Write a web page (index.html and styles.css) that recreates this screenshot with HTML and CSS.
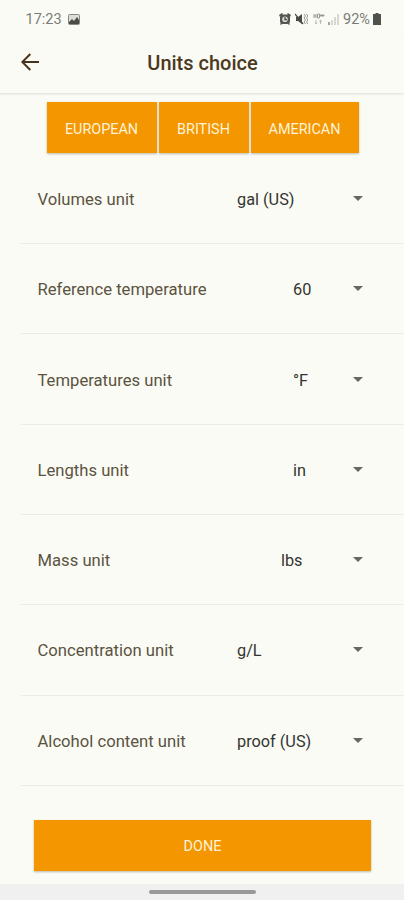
FILE: index.html
```html
<!DOCTYPE html>
<html lang="en">
<head>
<meta charset="utf-8">
<title>Units choice</title>
<link rel="stylesheet" href="styles.css">
</head>
<body>
<div class="status">
  <span class="clock">17:23</span>
  <svg class="picture" width="12" height="11" viewBox="0 0 12 11"><rect x=".5" y=".5" width="11" height="10" rx="1" fill="#deded9" stroke="#888984"/><path d="M1 8l3-3 2 2 3-4 2 3v4H1z" fill="#4b4c48"/></svg>
  <div class="indicators">
    <svg width="12" height="12" viewBox="0 0 12 12"><path d="M0 2l3-2 1 1-3 3zM12 2L9 0 8 1l3 3zM1 11l2-2 1 1-2 2zM11 11L9 9l-1 1 2 2z" fill="#555652"/><rect x="1" y="1.5" width="10" height="9.5" rx="3" fill="#555652"/><circle cx="6" cy="6.3" r="2.8" fill="#d8d9d4"/><path d="M6 4v2.6h2" fill="none" stroke="#444" stroke-width="1.2"/></svg>
    <svg class="mute" width="13" height="12" viewBox="0 0 13 12"><path d="M1 4h2l4-3v10L3 8H1z" fill="#4b4c48"/><path d="M0 1l8 10" stroke="#4b4c48" stroke-width="1.3"/><path d="M9 1l1.5 2L9 5l1.5 2L9 9l1.5 2M11.5 1L13 3l-1.5 2L13 7l-1.5 2L13 11" fill="none" stroke="#777874" stroke-width=".8"/></svg>
    <svg class="network" width="12" height="12" viewBox="0 0 12 12"><path d="M1 1v4M3 1v4M1 3h2M4.5 1v4h2V1zM8 1v3M10 1v3M7 2.5h4.5" fill="none" stroke="#92938f" stroke-width=".9"/><path d="M3 7v3.5M2 9.5l1 1.5 1-1.5M7.5 11V7M6.5 8.5l1-1.5 1 1.5" fill="none" stroke="#b2b3af" stroke-width=".9"/></svg>
    <svg class="signal" width="11" height="12" viewBox="0 0 11 12"><path d="M0 9h2v3H0z" fill="#a5a6a2"/><path d="M3 7h2v5H3zM6 4h2v8H6zM9 1h2v11H9z" fill="#d7d8d3"/></svg>
    <span class="percent">92%</span>
    <svg class="battery" width="8" height="12" viewBox="0 0 8 12"><path d="M2.5 0h3v1H8v11H0V1h2.5z" fill="#50514d"/></svg>
  </div>
</div>
<header class="header">
  <svg class="back" width="18" height="18" viewBox="0 0 18 18"><path d="M18 9H1.5M9.3 1L1.3 9l8 8" fill="none" stroke="#4b321b" stroke-width="2"/></svg>
  <h1 class="title">Units choice</h1>
</header>
<div class="presets">
  <button class="button european">EUROPEAN</button>
  <button class="button british">BRITISH</button>
  <button class="button american">AMERICAN</button>
</div>
<main class="rows">
  <div class="row"><span class="label">Volumes unit</span><span class="value wide">gal (US)</span><i class="caret"></i></div>
  <div class="row"><span class="label">Reference temperature</span><span class="value">60</span><i class="caret"></i></div>
  <div class="row"><span class="label">Temperatures unit</span><span class="value">°F</span><i class="caret"></i></div>
  <div class="row"><span class="label">Lengths unit</span><span class="value">in</span><i class="caret"></i></div>
  <div class="row"><span class="label">Mass unit</span><span class="value medium">lbs</span><i class="caret"></i></div>
  <div class="row"><span class="label">Concentration unit</span><span class="value wide">g/L</span><i class="caret"></i></div>
  <div class="row"><span class="label">Alcohol content unit</span><span class="value wide">proof (US)</span><i class="caret"></i></div>
</main>
<button class="button done">DONE</button>
<div class="navigation"><div class="handle"></div></div>
</body>
</html>
```
FILE: styles.css
```css
* { box-sizing: border-box; }
body {
  margin: 0;
  height: 900px;
  overflow: hidden;
  background: #fafbf5;
  font-family: Roboto, sans-serif;
  display: flex;
  flex-direction: column;
}
svg { display: block; flex: none; }
.status {
  height: 38px;
  padding: 0 23px 0 25.5px;
  display: flex;
  align-items: center;
  color: #7a7b77;
  font-size: 14.5px;
}
.clock { width: 42.5px; }
.indicators { margin-left: auto; display: flex; align-items: center; }
.mute { margin-left: 4px; }
.network { margin-left: 5px; }
.signal { margin-left: 3px; }
.percent { width: 27px; margin-left: 4px; white-space: nowrap; }
.battery { margin-left: 3px; }
.header {
  height: 55px;
  padding-left: 21px;
  display: flex;
  align-items: center;
  box-shadow: 0 1px 2px rgba(60, 60, 50, .15);
}
.back { margin-bottom: 8px; }
.title {
  margin: 0 38px 6px 0;
  flex: 1;
  text-align: center;
  color: #4b3921;
  font-size: 20px;
  font-weight: 500;
}
.presets {
  display: flex;
  gap: 2px;
  padding: 9px 0 0 47px;
}
.button {
  border: 0;
  padding: 2px 0 0;
  height: 51px;
  background: #f49600;
  color: #fff3d8;
  font: 400 14.4px Roboto, sans-serif;
  box-shadow: 0 1px 2px rgba(70, 60, 30, .35);
}
.presets .button { padding: 3px 1px 0 0; }
.european { width: 110px; }
.british { width: 90px; }
.american { width: 108px; }
.rows { padding: .7px 0 0 21px; }
.row {
  height: 90.34px;
  padding-left: 16.5px;
  display: flex;
  align-items: center;
  border-bottom: 1px solid #ebece7;
  font-size: 16.65px;
}
.label { flex: 1; padding-top: 2px; color: #5c5341; }
.value { width: 60px; padding-top: 2px; color: #343531; font-size: 16.3px; }
.medium { width: 72px; }
.wide { width: 116px; }
.caret {
  margin-right: 41px;
  border: 5.5px solid transparent;
  border-top-color: #666762;
  border-bottom: 0;
}
.done { margin: 34px 33px 0 34px; }
.navigation {
  margin-top: auto;
  height: 16px;
  background: #f0f0f0;
  display: flex;
  justify-content: center;
}
.handle {
  width: 107px;
  height: 4px;
  margin: 6px 0 0 1px;
  border-radius: 2px;
  background: #999;
}
```
